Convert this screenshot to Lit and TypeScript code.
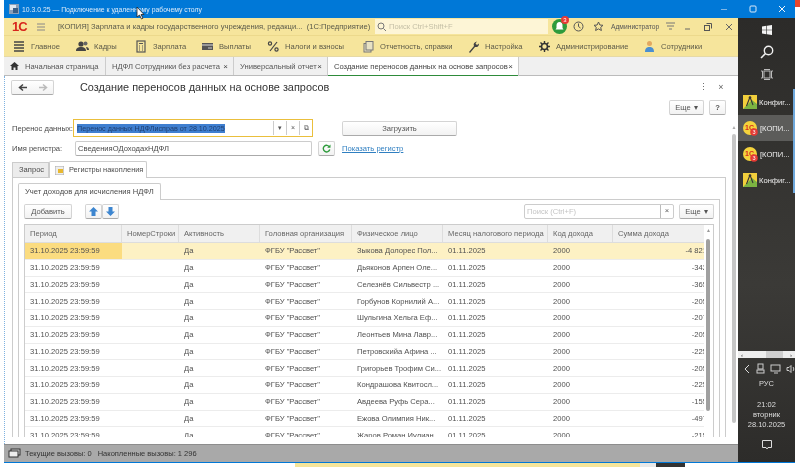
import { LitElement, css, html, svg } from "lit"
import { customElement } from "lit/decorators.js"

const columns = [
  { title: "Период", width: 97 },
  { title: "НомерСтроки", width: 57 },
  { title: "Активность", width: 81 },
  { title: "Головная организация", width: 92 },
  { title: "Физическое лицо", width: 91 },
  { title: "Месяц налогового периода", width: 105 },
  { title: "Код дохода", width: 65 },
  { title: "Сумма дохода", width: 93 },
]

const rows = [
  ["Зыкова Долорес Пол...", "-4 821"],
  ["Дьяконов Арпен Оле...", "-342"],
  ["Селезнёв Сильвестр ...", "-365"],
  ["Горбунов Корнилий А...", "-205"],
  ["Шульгина Хельга Еф...", "-207"],
  ["Леонтьев Мина Лавр...", "-205"],
  ["Петровскийа Афина ...", "-225"],
  ["Григорьев Трофим Си...", "-205"],
  ["Кондрашова Квитосл...", "-225"],
  ["Авдеева Руфь Сера...", "-155"],
  ["Ежова Олимпия Ник...", "-497"],
  ["Жаров Роман Иулиан...", "-215"],
]

const sections = [
  { label: "Главное", icon: "menu", w: 63 },
  { label: "Кадры", icon: "people", w: 59 },
  { label: "Зарплата", icon: "calc", w: 66 },
  { label: "Выплаты", icon: "card", w: 66 },
  { label: "Налоги и взносы", icon: "percent", w: 95 },
  { label: "Отчетность, справки", icon: "docs", w: 105 },
  { label: "Настройка", icon: "wrench", w: 71 },
  { label: "Администрирование", icon: "gear", w: 105 },
  { label: "Сотрудники", icon: "person", w: 70 },
]

const sectionIcon = (name: string) => {
  switch (name) {
    case "menu":
      return svg`<path d="M1 2h10M1 5h10M1 8h10M1 11h10" stroke="#444" stroke-width="1.4"/>`
    case "people":
      return svg`<circle cx="5" cy="4" r="2.6" fill="#444"/><circle cx="9.5" cy="3.5" r="2" fill="#666"/><path d="M0 11c0-3 2-4 5-4s5 1 5 4zM10 7c2 0 3 1 3 3h-2z" fill="#444"/>`
    case "calc":
      return svg`<rect x="2" y="1" width="8" height="11" fill="none" stroke="#555" stroke-width="1.2"/><path d="M4 3.5h4" stroke="#555"/><path d="M4 6h1M7 6h1M4 8h1M7 8h1M4 10h1M7 10h1" stroke="#555"/>`
    case "card":
      return svg`<rect x="1" y="3" width="11" height="7" fill="#555"/><path d="M1 5h11" stroke="#ddd"/><path d="M7 8h4" stroke="#ccc"/>`
    case "percent":
      return svg`<circle cx="3" cy="3.5" r="1.6" fill="none" stroke="#444" stroke-width="1.2"/><circle cx="9.5" cy="9.5" r="1.6" fill="none" stroke="#444" stroke-width="1.2"/><path d="M10 2L3 11" stroke="#444" stroke-width="1.2"/>`
    case "docs":
      return svg`<rect x="2" y="3.5" width="7" height="8.5" fill="#e8e2c4" stroke="#777"/><rect x="4" y="1.5" width="7" height="8.5" fill="#e8e2c4" stroke="#777"/>`
    case "wrench":
      return svg`<path d="M2 12l5-6c-1-2 0-4 3-4.500l-1.500 2 1.500 1.500 2-1.500c0 3-2 4-4 3.500l-5 6z" fill="#444"/>`
    case "gear":
      return svg`<circle cx="6.500" cy="6.500" r="3" fill="none" stroke="#333" stroke-width="1.600"/><path d="M6.500 1v2M6.500 10v2M1 6.500h2M10 6.500h2M2.500 2.500l1.500 1.500M9 9l1.500 1.500M10.500 2.500L9 4M4 9l-1.500 1.500" stroke="#333" stroke-width="1.400"/>`
    default:
      return svg`<circle cx="6.500" cy="3.500" r="2.500" fill="#e2a860"/><path d="M2 12c0-4 2-5 4.500-5s4.500 1 4.500 5z" fill="#4a8fd0"/>`
  }
}

const configIcon = html`<svg width="14" height="14" viewBox="0 0 14 14">
  <rect width="14" height="14" fill="#f2cf3c"/>
  <path d="M0 14L9 5l5 4v5z" fill="#7cb342"/>
  <path d="M7 2L3.500 11M7 2l3 8" stroke="#333" stroke-width="1.100" fill="none"/>
  <circle cx="7" cy="2.500" r="1.300" fill="#333"/>
</svg>`

const oneCIcon = html`<svg width="15" height="15" viewBox="0 0 15 15">
  <circle cx="7" cy="7" r="7" fill="#f5d33c"/>
  <text x="2" y="9" font-size="7" font-weight="700" fill="#d62b1f" font-family="Liberation Sans">1C</text>
  <circle cx="11" cy="11" r="3.800" fill="#e53935"/>
  <text x="9.500" y="13" font-size="5.500" fill="#fff" font-family="Liberation Sans">3</text>
</svg>`

@customElement("app-root")
export class AppRoot extends LitElement {
  static styles = css`
    :host {
      display: block;
      width: 800px;
      height: 467px;
      overflow: hidden;
      position: relative;
      background: #fff;
      font-family: "Liberation Sans", Arial, sans-serif;
      font-size: 7.6px;
      color: #4a4a4a;
    }
    svg { display: block; flex: none; }
    .screen { display: flex; height: 463px; padding-left: 4px; }
    .rdp { width: 791px; height: 463px; display: flex; flex-direction: column; background: #0078d7; }
    .title-bar { height: 18px; flex: none; display: flex; align-items: center; color: #dcebf9; padding-left: 5px; gap: 3px; font-size: 6.850px; }
    .title-bar .spacer { flex: 1; }
    .win-btn { width: 26px; display: flex; justify-content: center; }
    .rdp-body { flex: 1; display: flex; min-height: 0; margin-bottom: 1px; }
    .app { width: 734px; display: flex; flex-direction: column; background: #fff; min-height: 0; }
    .taskbar { width: 57px; background: linear-gradient(#2c2b29, #3b3a37 60%, #2d2c2a); color: #eee; display: flex; flex-direction: column; align-items: stretch; }

    .head { height: 17px; flex: none; background: #f6e59c; display: flex; align-items: center; color: #555; }
    .logo { margin-left: 8px; width: 25px; color: #d8261c; font-weight: 700; font-size: 13px; letter-spacing: -1px; border-bottom: 0; }
    .burger { margin-right: 12px; }
    .app-name { width: 317px; white-space: pre; color: #5a5a4a; }
    .global-search { width: 173px; height: 15px; background: #fdf5d6; display: flex; align-items: center; gap: 2px; color: #c4bfa6; margin-right: 4px; padding-left: 2px; box-sizing: border-box; white-space: nowrap; overflow: hidden; }
    .bell { width: 15px; height: 15px; border-radius: 50%; background: #2e9b3c; position: relative; margin-right: 7px; display: flex; align-items: center; justify-content: center; }
    .bell b { position: absolute; right: -2px; top: -3px; width: 8px; height: 8px; border-radius: 50%; background: #e53935; color: #fff; font-size: 6px; font-weight: 400; text-align: center; line-height: 8px; }
    .head-ico { margin-right: 9px; }
    .head-ico.first { margin-left: -1px; }
    .admin { font-size: 6.700px; width: 55px; white-space: nowrap; margin-left: -2px; }
    .head-tools { display: flex; align-items: center; gap: 13px; }
    .head-tools svg:first-child { margin-right: -4px; }

    .sections { height: 22px; flex: none; background: #f6e59c; border-top: 1px solid #ecd98c; border-bottom: 1px solid #e6d9a6; box-sizing: border-box; display: flex; align-items: center; padding-left: 9px; }
    .section { display: flex; align-items: center; gap: 5px; white-space: nowrap; color: #5c5a48; box-sizing: border-box; flex: none; }
    .section svg { width: 13px; height: 13px; }

    .tabs { height: 19px; flex: none; background: #f0f0f0; border-bottom: 1px solid #bbb; display: flex; box-sizing: border-box; }
    .tab { display: flex; align-items: center; justify-content: space-between; padding: 0 5px 0 6px; border-right: 1px solid #ccc; white-space: nowrap; box-sizing: border-box; color: #555; }
    .tab.active { background: #fff; box-shadow: inset 0 -1px 0 #2e8b3a; height: 19px; color: #444; }
    .x { color: #444; font-size: 8px; }

    .form { flex: 1; min-height: 0; position: relative; overflow: hidden; padding: 0 0 0 7px; border-left: 1px dotted #7fb2e0; }
    .form-head { display: flex; height: 24px; align-items: flex-start; padding-top: 4px; box-sizing: border-box; }
    .nav-btns { width: 43px; height: 15px; margin: 0 26px 0 -1px; }
    .btn { display: flex; align-items: center; justify-content: center; background: linear-gradient(#fff, #f2f2f2); border: 1px solid #d4d4d4; border-bottom-color: #aaa; border-radius: 2px; box-sizing: border-box; white-space: nowrap; color: #555; }
    .form-title { font-size: 10.900px; color: #333; flex: none; width: 614px; margin-top: 1px; }
    .dots { width: 18px; text-align: center; color: #666; margin-top: 2px; font-size: 9px; }
    .actions { display: flex; justify-content: flex-end; gap: 5px; height: 15px; margin-right: 12px; }
    .more { width: 35px; height: 15px; gap: 3px; }
    .help { width: 17px; height: 15px; font-weight: 700; }
    .row1 { display: flex; align-items: center; height: 18px; margin-top: 4px; }
    .label { width: 61px; flex: none; white-space: nowrap; }
    .combo { width: 240px; height: 18px; border: 1px solid #eabf3c; box-sizing: border-box; display: flex; align-items: center; padding: 0 0 0 3px; }
    .combo mark { background: #3f7fd0; color: #1f3f6f; white-space: nowrap; font-size: 7.200px; }
    .combo .grow { flex: 1; }
    .combo i { font-style: normal; width: 12px; height: 14px; border-left: 1px solid #ccc; text-align: center; font-size: 7px; line-height: 14px; color: #555; }
    .load { width: 115px; height: 15px; margin-left: 29px; }
    .row2 { display: flex; align-items: center; height: 15px; margin-top: 4px; }
    .field { width: 237px; height: 15px; margin-left: 2px; border: 1px solid #ccc; border-bottom-color: #aaa; border-radius: 2px; box-sizing: border-box; padding-left: 2px; line-height: 13px; }
    .refresh { width: 17px; height: 15px; margin-left: 6px; }
    .link { color: #2f7fc1; text-decoration: underline; margin-left: 7px; white-space: nowrap; }

    .outer-tabs { display: flex; margin-top: 4px; height: 17px; align-items: flex-end; }
    .otab { width: 37px; height: 15px; padding: 0 6px; border: 1px solid #ccc; border-bottom: none; background: #ececec; box-sizing: border-box; line-height: 14px; white-space: nowrap; }
    .otab.on { width: 98px; height: 17px; padding: 0 5px; background: #fff; position: relative; top: 1px; display: flex; align-items: center; gap: 5px; border-radius: 2px 2px 0 0; font-size: 7.400px; }
    .outer-panel { width: 714px; height: 260px; border: 1px solid #ccc; border-bottom: none; box-sizing: border-box; padding: 4px 5px 0 5px; overflow: hidden; }
    .itab { width: 143px; height: 17px; border: 1px solid #ccc; border-bottom: none; box-sizing: border-box; padding-left: 6px; line-height: 15px; background: #fff; position: relative; top: 1px; border-radius: 2px 2px 0 0; white-space: nowrap; }
    .inner-panel { border: 1px solid #ccc; border-bottom: none; height: 300px; box-sizing: border-box; padding: 4px 5px 0 5px; }
    .toolbar { display: flex; height: 15px; margin-bottom: 5px; }
    .add { width: 48px; height: 15px; }
    .arrows { display: flex; margin-left: 13px; }
    .arrows .btn { width: 17px; height: 15px; }
    .spacer { flex: 1; }
    .search { width: 150px; height: 15px; border: 1px solid #ccc; border-radius: 2px; box-sizing: border-box; display: flex; align-items: center; color: #c4c4c4; padding-left: 2px; }
    .search .grow { flex: 1; }
    .search i { font-style: normal; width: 12px; height: 13px; border-left: 1px solid #bbb; text-align: center; line-height: 12px; color: #555; }
    .toolbar .more { margin-left: 5px; }

    .grid { width: 690px; border: 1px solid #ccc; border-bottom: none; box-sizing: border-box; height: 215px; overflow: hidden; position: relative; }
    .tr { display: flex; height: 16.75px; box-sizing: border-box; border-bottom: 1px solid #ececec; align-items: center; background: #fff; }
    .tr.hd { height: 18px; background: #f0f0f0; border-bottom: 1px solid #ddd; color: #666; }
    .tr.sel { background: #fdf1c4; }
    .tc { padding: 0 5px; box-sizing: border-box; white-space: nowrap; overflow: hidden; flex: none; color: #505050; height: 100%; display: flex; align-items: center; }
    .hd .tc { border-right: 1px solid #ddd; color: #666; }
    .tc.cur { background: #fbdc80; }
    .tc.num { justify-content: flex-end; padding-right: 0; }
    .tc.num span { margin-right: -1px; }
    .sb { position: absolute; right: 0; top: 0; bottom: 0; width: 9px; background: #fff; display: flex; justify-content: center; color: #999; font-size: 5px; line-height: 10px; }
    .sb::after { content: ""; position: absolute; left: 2px; width: 4px; top: 14px; height: 172px; background: #a0a0a0; border-radius: 2px; }
    .outer-sb { position: absolute; right: 1px; top: 0; bottom: 0; width: 6px; color: #aaa; font-size: 5px; text-align: center; line-height: 10px; padding-top: 46px; box-sizing: border-box; }
    .outer-sb::after { content: ""; position: absolute; left: 1px; width: 4px; top: 58px; height: 289px; background: #c6c6c6; border-radius: 2px; }

    .status { height: 18px; flex: none; background: #a9a9a9; display: flex; align-items: center; gap: 4px; padding-left: 4px; color: #333; box-shadow: inset 0 1px 0 #8d8d8d; font-size: 7.500px; }
    .status span { white-space: nowrap; margin-right: 2px; }

    .tb-top { height: 71px; display: flex; flex-direction: column; align-items: center; padding-top: 7px; box-sizing: border-box; gap: 10px; flex: none; }
    .task { height: 26px; display: flex; align-items: center; gap: 2px; padding-left: 5px; font-size: 7.600px; color: #eee; white-space: nowrap; flex: none; box-sizing: border-box; border-right: 2px solid transparent; }
    .task.open { border-right-color: #6ea8dc; }
    .task.cur { background: #5c5c5a; }
    .tb-gap { flex: 1; }
    .hscroll { height: 7px; background: #eee; display: flex; justify-content: space-between; align-items: center; color: #333; font-size: 6px; padding: 0 3px; position: relative; flex: none; }
    .hscroll::after { content: ""; position: absolute; left: 28px; width: 17px; top: 0; bottom: 0; background: #cfcfcf; }
    .tray { display: flex; justify-content: flex-start; gap: 5px; padding: 5px 0 0 5px; height: 18px; box-sizing: border-box; flex: none; }
    .clock { text-align: center; line-height: 10px; font-size: 7.500px; color: #ddd; }
    .lang { text-align: center; margin: 3px 0 12px; font-size: 7.500px; color: #ddd; }
    .note { display: flex; justify-content: center; margin: 10px 0 12px; }

    .below { height: 4px; display: flex; background: #fff; }
    .below i { display: block; height: 4px; }
    .side { flex: none; width: 5px; display: flex; flex-direction: column; background: #fff; }
    .side i { display: block; height: 7px; background: #e8462c; }
    .cursor { position: absolute; left: 136px; top: 7px; }
    .blurred { filter: blur(0.3px); }
  `

  renderGrid () {
    return html`<div class="grid">
      <div class="tr hd">
        ${columns.map(c => html`<div class="tc" style="width:${c.width}px">${c.title}</div>`)}
      </div>
      ${rows.map((r, i) => html`<div class="tr ${i === 0 ? "sel" : ""}">
        <div class="tc ${i === 0 ? "cur" : ""}" style="width:${columns[0].width}px">31.10.2025 23:59:59</div>
        <div class="tc" style="width:${columns[1].width}px"></div>
        <div class="tc" style="width:${columns[2].width}px">Да</div>
        <div class="tc" style="width:${columns[3].width}px">ФГБУ "Рассвет"</div>
        <div class="tc" style="width:${columns[4].width}px">${r[0]}</div>
        <div class="tc" style="width:${columns[5].width}px">01.11.2025</div>
        <div class="tc" style="width:${columns[6].width}px">2000</div>
        <div class="tc num" style="width:${columns[7].width}px"><span>${r[1]}</span></div>
      </div>`)}
      <div class="sb">▲</div>
    </div>`
  }

  render () {
    return html`
      <div class="blurred">
      <div class="screen">
        <div class="rdp">
          <div class="title-bar">
            <svg width="10" height="10" viewBox="0 0 10 10"><rect width="10" height="10" fill="#8aa0b8"/><rect x="1" y="1" width="6" height="5" fill="#dfe8f0"/><rect x="4" y="4" width="5" height="5" fill="#3a5f86"/></svg>
            <span>10.3.0.25 — Подключение к удаленному рабочему столу</span>
            <span class="spacer"></span>
            <div class="win-btn"><svg width="8" height="8"><path d="M1 4.500h6" stroke="#7fb6e6"/></svg></div>
            <div class="win-btn"><svg width="8" height="8"><rect x="1" y="1" width="6" height="6" rx="1" fill="none" stroke="#dceaf8"/></svg></div>
            <div class="win-btn"><svg width="8" height="8"><path d="M1 1l6 6M7 1L1 7" stroke="#eef5fc"/></svg></div>
          </div>
          <div class="rdp-body">
            <div class="app">
              <div class="head">
                <span class="logo">1С</span>
                <svg class="burger" width="9" height="8"><path d="M0 1h8M0 4h8M0 7h8" stroke="#888"/></svg>
                <span class="app-name">[КОПИЯ] Зарплата и кадры государственного учреждения, редакци...  (1С:Предприятие)</span>
                <div class="global-search">
                  <svg width="10" height="10" viewBox="0 0 10 10"><circle cx="4" cy="4" r="3" fill="none" stroke="#777"/><path d="M6.500 6.500L9 9" stroke="#777"/></svg>
                  Поиск Ctrl+Shift+F
                </div>
                <div class="bell"><svg width="9" height="9" viewBox="0 0 9 9"><path d="M4.500 0c2 0 3 1.500 3 3.500V6l1 1.500H.5L1.500 6V3.500C1.500 1.500 2.500 0 4.500 0z" fill="#fff"/></svg><b>3</b></div>
                <svg class="head-ico first" width="11" height="11" viewBox="0 0 11 11"><circle cx="5.500" cy="5.500" r="4.500" fill="none" stroke="#555"/><path d="M5.500 2.500v3l2 1.500" fill="none" stroke="#555"/></svg>
                <svg class="head-ico" width="11" height="11" viewBox="0 0 11 11"><path d="M5.500 1l1.400 3 3.100.300-2.300 2.100.700 3.100-2.900-1.600-2.900 1.600.700-3.100L1 4.300l3.100-.300z" fill="none" stroke="#555"/></svg>
                <span class="admin">Администратор</span>
                <div class="head-tools">
                  <svg width="9" height="9"><path d="M0 1h9M1 4h7M3 7h3" stroke="#777"/></svg>
                  <svg width="7" height="7"><path d="M1 6h5" stroke="#666"/></svg>
                  <svg width="8" height="8"><rect x="0.500" y="2.500" width="5" height="5" fill="none" stroke="#555"/><path d="M2.500 .5h5v5" fill="none" stroke="#555"/></svg>
                  <svg width="8" height="8"><path d="M1 1l6 6M7 1L1 7" stroke="#666"/></svg>
                </div>
              </div>
              <div class="sections">
                ${sections.map(s => html`<div class="section" style="width:${s.w}px">
                  <svg viewBox="0 0 13 13">${sectionIcon(s.icon)}</svg>${s.label}
                </div>`)}
              </div>
              <div class="tabs">
                <div class="tab" style="width:102px;justify-content:flex-start;gap:6px">
                  <svg width="9" height="8" viewBox="0 0 9 8"><path d="M4.500 0L9 4H7.500v4H5.500V5.500h-2V8H1.500V4H0z" fill="#333"/></svg>
                  Начальная страница
                </div>
                <div class="tab" style="width:128px">НДФЛ Сотрудники без расчета <span class="x">×</span></div>
                <div class="tab" style="width:94px">Универсальный отчет <span class="x">×</span></div>
                <div class="tab active" style="width:191px">Создание переносов данных на основе запросов <span class="x">×</span></div>
              </div>
              <div class="form">
                <div class="form-head">
                  <div class="btn nav-btns">
                    <svg width="36" height="9" viewBox="0 0 36 9"><path d="M12 4.500H5M8 1.500L4.500 4.500 8 7.500" fill="none" stroke="#444" stroke-width="1.500"/><path d="M24 4.500h7M28 1.500l3.500 3-3.500 3" fill="none" stroke="#bbb" stroke-width="1.500"/></svg>
                  </div>
                  <div class="form-title">Создание переносов данных на основе запросов</div>
                  <div class="dots">⋮</div>
                  <div class="dots">×</div>
                </div>
                <div class="actions">
                  <div class="btn more">Еще <span>▾</span></div>
                  <div class="btn help">?</div>
                </div>
                <div class="row1">
                  <div class="label">Перенос данных:</div>
                  <div class="combo">
                    <mark>Перенос данных НДФЛисправ от 28.10.2025</mark>
                    <span class="grow"></span>
                    <i>▾</i><i>×</i><i>⧉</i>
                  </div>
                  <div class="btn load">Загрузить</div>
                </div>
                <div class="row2">
                  <div class="label">Имя регистра:</div>
                  <div class="field">СведенияОДоходахНДФЛ</div>
                  <div class="btn refresh"><svg width="9" height="9" viewBox="0 0 9 9"><path d="M7.500 3a3.300 3.300 0 1 0 .3 2.500" fill="none" stroke="#2e9b3c" stroke-width="1.400"/><path d="M8.500 .5v3.300H5.200z" fill="#2e9b3c"/></svg></div>
                  <span class="link">Показать регистр</span>
                </div>
                <div class="outer-tabs">
                  <div class="otab">Запрос</div>
                  <div class="otab on">
                    <svg width="9" height="9" viewBox="0 0 9 9"><rect width="9" height="9" fill="#eee" stroke="#aaa"/><rect x="3" y="3" width="5" height="4" fill="#e8b830"/></svg>
                    Регистры накопления
                  </div>
                </div>
                <div class="outer-panel">
                  <div class="itab">Учет доходов для исчисления НДФЛ</div>
                  <div class="inner-panel">
                    <div class="toolbar">
                      <div class="btn add">Добавить</div>
                      <div class="arrows">
                        <div class="btn"><svg width="9" height="9" viewBox="0 0 9 9"><path d="M4.500 0L9 4.500H6.500V9h-4V4.500H0z" fill="#3d86d0"/></svg></div>
                        <div class="btn"><svg width="9" height="9" viewBox="0 0 9 9"><path d="M4.500 9L9 4.500H6.500V0h-4v4.500H0z" fill="#3d86d0"/></svg></div>
                      </div>
                      <span class="spacer"></span>
                      <div class="search"><span class="grow">Поиск (Ctrl+F)</span><i>×</i></div>
                      <div class="btn more">Еще <span>▾</span></div>
                    </div>
                    ${this.renderGrid()}
                  </div>
                </div>
                <div class="outer-sb">▲</div>
              </div>
              <div class="status">
                <svg width="13" height="11" viewBox="0 0 13 11"><rect x="3" y="1" width="9" height="6" fill="#ccc" stroke="#333"/><rect x="1" y="3" width="9" height="6" fill="#eee" stroke="#333"/></svg>
                <span>Текущие вызовы: 0</span>
                <span>Накопленные вызовы: 1 296</span>
              </div>
            </div>
            <div class="taskbar">
              <div class="tb-top">
                <svg width="10" height="10" viewBox="0 0 10 10"><path d="M0 1.500l4.400-.7v3.900H0zM5 .7L10 0v4.700H5zM0 5.300h4.400v3.900L0 8.500zM5 5.300h5V10L5 9.300z" fill="#f4f4f4"/></svg>
                <svg width="14" height="14" viewBox="0 0 14 14"><circle cx="8.500" cy="5.500" r="4.200" fill="none" stroke="#f0f0f0" stroke-width="1.400"/><path d="M5.500 8.500L1 13" stroke="#f0f0f0" stroke-width="1.600"/></svg>
                <svg width="12" height="11" viewBox="0 0 12 11"><rect x="3" y="2" width="6" height="7" fill="none" stroke="#bbb"/><path d="M0 2h1.500v7H0M12 2h-1.500v7H12M3 .5h6M3 10.500h6" fill="none" stroke="#bbb"/></svg>
              </div>
              <div class="task open">${configIcon}<span>Конфиг...</span></div>
              <div class="task open cur">${oneCIcon}<span>[КОПИ...</span></div>
              <div class="task open">${oneCIcon}<span>[КОПИ...</span></div>
              <div class="task open">${configIcon}<span>Конфиг...</span></div>
              <div class="tb-gap"></div>
              <div class="hscroll"><span>‹</span><span>›</span></div>
              <div class="tray">
                <svg width="8" height="12" viewBox="0 0 8 12"><path d="M6 2L2 6l4 4" fill="none" stroke="#ddd"/></svg>
                <svg width="9" height="12" viewBox="0 0 9 12"><rect x="2" y="1" width="5" height="5" fill="none" stroke="#ccc"/><rect x="1" y="7" width="7" height="3" fill="none" stroke="#ccc"/></svg>
                <svg width="11" height="12" viewBox="0 0 11 12"><rect x="1" y="2" width="9" height="6" fill="none" stroke="#ccc"/><path d="M4 10h4" stroke="#ccc"/></svg>
                <svg width="10" height="12" viewBox="0 0 10 12"><path d="M1 4.500h2l2-2v7l-2-2H1z" fill="none" stroke="#ccc"/><path d="M7 4c1 1 1 3 0 4" fill="none" stroke="#ccc"/></svg>
              </div>
              <div class="lang">РУС</div>
              <div class="clock">21:02<br />вторник<br />28.10.2025</div>
              <div class="note"><svg width="10" height="10" viewBox="0 0 10 10"><path d="M.5.5h9v7H6l-1 1.500L4 7.500H.5z" fill="none" stroke="#ddd"/></svg></div>
            </div>
          </div>
        </div>
        <div class="side"><i></i></div>
      </div>
      <div class="below">
        <i style="width:295px;background:#fff"></i>
        <i style="width:345px;background:#f5e59a"></i>
        <i style="width:16px;background:#e8e8e8"></i>
        <i style="width:29px;background:#333"></i>
      </div>
      </div>
      <svg class="cursor" width="9" height="13" viewBox="0 0 9 13"><path d="M1 0v10l2.500-2 2 4 1.500-.8-2-3.700H8z" fill="#fff" stroke="#222" stroke-width=".8"/></svg>
    `
  }
}
